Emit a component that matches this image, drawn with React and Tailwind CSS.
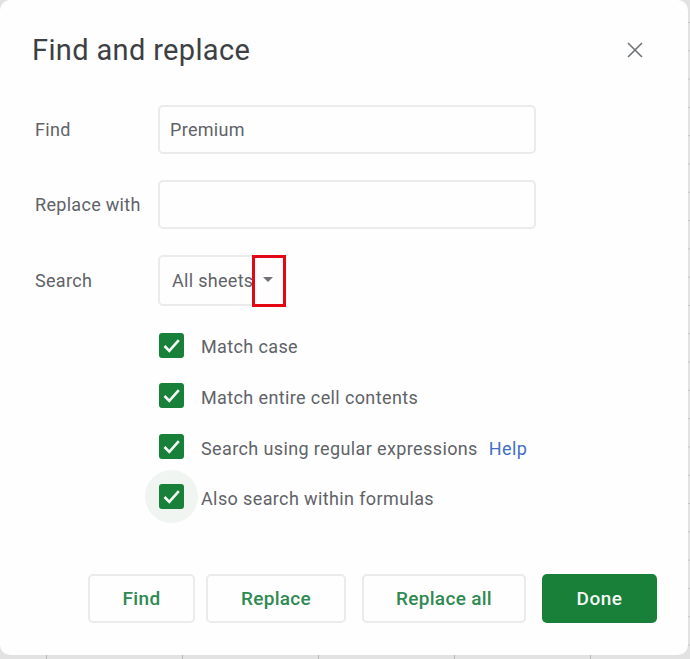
const font = "font-['Roboto',sans-serif]";

function Check() {
  return (
    <span className="flex h-[25px] w-[25px] shrink-0 items-center justify-center rounded-[3px] bg-[#188038]">
      <svg viewBox="0 0 25 25" className="h-[25px] w-[25px]" fill="none" stroke="#f4f8f5" strokeWidth="2.6">
        <path d="M5.5 13l4.8 4.8L19.8 7.2" />
      </svg>
    </span>
  );
}

function Field({ label, value, mt }) {
  return (
    <div className={`flex items-center ${mt}`}>
      <span className="w-[126px] pl-[3px] text-[18px] tracking-[0.3px] text-[#5f6368]">{label}</span>
      <div className="flex h-[49px] w-[378px] items-center rounded-[5px] border-2 border-[#ebebeb] pl-[10px] text-[18px] tracking-[0.3px] text-[#5f6368]">
        {value}
      </div>
    </div>
  );
}

function Option({ label, help, halo, mt, pt = "pt-[3px]" }) {
  return (
    <div className={`flex h-[25px] items-center ${mt}`}>
      <span className="relative flex">
        {halo && <span className="absolute left-[-14px] top-[-14px] h-[53px] w-[53px] rounded-full bg-[#f0f5f1]" />}
        <span className="relative"><Check /></span>
      </span>
      <span className={`relative ml-[17px] ${pt} text-[18px] tracking-[0.38px] text-[#5f6368]`}>{label}</span>
      {help && <span className={`ml-[11px] ${pt} text-[18px] tracking-[0.38px] text-[#3f6fc4]`}>Help</span>}
    </div>
  );
}

function Btn({ children, w }) {
  return (
    <div className={`flex h-[49px] ${w} items-center justify-center rounded-[5px] border-2 border-[#ebebeb] pt-[2px] text-[19px] font-medium tracking-[0.3px] text-[#2f8a52]`}>
      {children}
    </div>
  );
}

export default function App() {
  return (
    <div className={`${font} relative h-[659px] w-[690px] overflow-hidden bg-[#e2e2e2] bg-[linear-gradient(90deg,#b9b9b9_1px,transparent_1px),linear-gradient(180deg,#c4c4c4_1px,transparent_1px)] bg-[size:136px_28.3px] bg-[position:46px_22px]`}>
      <div className="h-[655px] w-[688px] rounded-[10px] bg-[#fefefe] pl-[32px] pt-[30px]">
        <div className="flex items-center">
          <h1 className="text-[29px] font-normal leading-[40px] tracking-[0.35px] text-[#3c4043]">Find and replace</h1>
          <svg viewBox="0 0 16 16" className="ml-[377px] h-[16px] w-[16px]" fill="none" stroke="#6f7276" strokeWidth="1.6">
            <path d="M1 1l14 14M15 1L1 15" />
          </svg>
        </div>
        <Field label="Find" value="Premium" mt="mt-[35px]" />
        <Field label="Replace with" mt="mt-[26px]" />
        <div className="mt-[26px] flex items-center">
          <span className="w-[126px] pb-[1px] pl-[3px] text-[18px] tracking-[0.3px] text-[#5f6368]">Search</span>
          <div className="relative flex h-[51px] w-[128px] items-center rounded-[5px] border-2 border-[#ebebeb] pl-[12px] text-[18px] tracking-[0.3px] text-[#5f6368]">
            All sheets
            <span className="absolute left-[103px] top-[20px] h-0 w-0 border-x-[5px] border-t-[5px] border-x-transparent border-t-[#6f7276]" />
            <span className="absolute left-[92px] top-[-2px] h-[52px] w-[34px] border-[3px] border-[#e30613]" />
          </div>
        </div>
        <div className="pl-[127px]">
          <Option label="Match case" mt="mt-[27px]" pt="pt-[1px]" />
          <Option label="Match entire cell contents" mt="mt-[25px]" />
          <Option label="Search using regular expressions" help mt="mt-[26px]" />
          <Option label="Also search within formulas" halo mt="mt-[25px]" />
        </div>
        <div className="mt-[65px] flex pl-[56px]">
          <Btn w="w-[107px]">Find</Btn>
          <div className="ml-[11px]"><Btn w="w-[140px]">Replace</Btn></div>
          <div className="ml-[16px]"><Btn w="w-[164px]">Replace all</Btn></div>
          <div className="ml-[16px] flex h-[49px] w-[115px] items-center justify-center rounded-[5px] bg-[#188038] pt-[2px] text-[19px] font-medium tracking-[0.5px] text-[#f4f8f5]">
            Done
          </div>
        </div>
      </div>
    </div>
  );
}
